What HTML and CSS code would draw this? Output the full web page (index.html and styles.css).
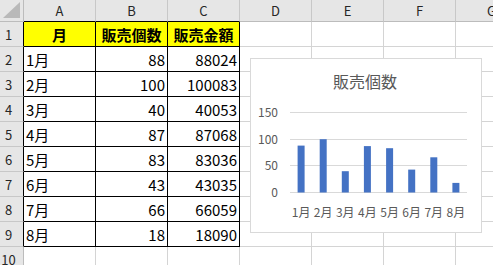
FILE: index.html
```html
<!DOCTYPE html>
<html lang="ja">
<head>
<meta charset="utf-8">
<title>販売個数</title>
<link rel="stylesheet" href="styles.css">
</head>
<body>
<div class="sheet">
  <div class="corner"><svg class="tri" width="17" height="16" viewBox="0 0 17 16"><polygon points="17,0 17,16 0,16" fill="#b9b9b9"/></svg></div>
  <div class="ch">A</div><div class="ch">B</div><div class="ch">C</div><div class="ch">D</div><div class="ch">E</div><div class="ch">F</div><div class="ch">G</div>

  <div class="rh blk">1</div>
  <div class="c t hd">月</div><div class="c t hd">販売個数</div><div class="c t hd">販売金額</div>
  <div class="c"></div><div class="c"></div><div class="c"></div><div class="c"></div>

  <div class="rh blk">2</div>
  <div class="c t mon">1月</div><div class="c t num">88</div><div class="c t num">88024</div>
  <div class="c"></div><div class="c"></div><div class="c"></div><div class="c"></div>

  <div class="rh blk">3</div>
  <div class="c t mon">2月</div><div class="c t num">100</div><div class="c t num">100083</div>
  <div class="c"></div><div class="c"></div><div class="c"></div><div class="c"></div>

  <div class="rh blk">4</div>
  <div class="c t mon">3月</div><div class="c t num">40</div><div class="c t num">40053</div>
  <div class="c"></div><div class="c"></div><div class="c"></div><div class="c"></div>

  <div class="rh blk">5</div>
  <div class="c t mon">4月</div><div class="c t num">87</div><div class="c t num">87068</div>
  <div class="c"></div><div class="c"></div><div class="c"></div><div class="c"></div>

  <div class="rh blk">6</div>
  <div class="c t mon">5月</div><div class="c t num">83</div><div class="c t num">83036</div>
  <div class="c"></div><div class="c"></div><div class="c"></div><div class="c"></div>

  <div class="rh blk">7</div>
  <div class="c t mon">6月</div><div class="c t num">43</div><div class="c t num">43035</div>
  <div class="c"></div><div class="c"></div><div class="c"></div><div class="c"></div>

  <div class="rh blk">8</div>
  <div class="c t mon">7月</div><div class="c t num">66</div><div class="c t num">66059</div>
  <div class="c"></div><div class="c"></div><div class="c"></div><div class="c"></div>

  <div class="rh blk">9</div>
  <div class="c t mon">8月</div><div class="c t num">18</div><div class="c t num">18090</div>
  <div class="c"></div><div class="c"></div><div class="c"></div><div class="c"></div>

  <div class="rh">10</div>
  <div class="c"></div><div class="c"></div><div class="c"></div>
  <div class="c"></div><div class="c"></div><div class="c"></div><div class="c"></div>
</div>

<div class="chart">
  <svg class="chart-svg" width="230" height="173" viewBox="0 0 230 173">
    <text class="title" x="114" y="29" text-anchor="middle">販売個数</text>
    <g class="grid">
      <line x1="39" y1="53.5" x2="216" y2="53.5"/>
      <line x1="39" y1="80.5" x2="216" y2="80.5"/>
      <line x1="39" y1="106.5" x2="216" y2="106.5"/>
      <line x1="39" y1="133.5" x2="216" y2="133.5"/>
    </g>
    <g class="ylab">
      <text x="27" y="57.5" text-anchor="end">150</text>
      <text x="27" y="84.5" text-anchor="end">100</text>
      <text x="27" y="110.5" text-anchor="end">50</text>
      <text x="27" y="137.5" text-anchor="end">0</text>
    </g>
    <g class="bars">
      <rect x="46.6" y="86.6" width="7" height="46.9"/>
      <rect x="68.7" y="80.2" width="7" height="53.3"/>
      <rect x="90.8" y="112.2" width="7" height="21.3"/>
      <rect x="112.9" y="87.1" width="7" height="46.4"/>
      <rect x="135.1" y="89.2" width="7" height="44.3"/>
      <rect x="157.2" y="110.6" width="7" height="22.9"/>
      <rect x="179.3" y="98.3" width="7" height="35.2"/>
      <rect x="201.4" y="123.9" width="7" height="9.6"/>
    </g>
    <g class="xlab">
      <text x="50.1" y="158" text-anchor="middle">1月</text>
      <text x="72.2" y="158" text-anchor="middle">2月</text>
      <text x="94.3" y="158" text-anchor="middle">3月</text>
      <text x="116.4" y="158" text-anchor="middle">4月</text>
      <text x="138.6" y="158" text-anchor="middle">5月</text>
      <text x="160.7" y="158" text-anchor="middle">6月</text>
      <text x="182.8" y="158" text-anchor="middle">7月</text>
      <text x="204.9" y="158" text-anchor="middle">8月</text>
    </g>
  </svg>
</div>
</body>
</html>
```

FILE: styles.css
```css
html, body {
  margin: 0;
  padding: 0;
  background: #ffffff;
  overflow: hidden;
}
body {
  width: 493px;
  height: 265px;
  position: relative;
  font-family: "Noto Sans CJK JP", "Noto Sans", sans-serif;
}
.sheet {
  display: grid;
  grid-template-columns: 24px repeat(7, 72px);
  grid-template-rows: 22px repeat(10, 25px);
}
.sheet > div {
  box-sizing: border-box;
  min-width: 0;
  overflow: hidden;
  white-space: nowrap;
}
.corner {
  background: #e6e6e6;
  border-right: 1px solid #bcbcbc;
  border-bottom: 1px solid #bcbcbc;
  position: relative;
}
.tri {
  position: absolute;
  right: 3px;
  bottom: 3px;
  display: block;
}
.ch {
  background: #e6e6e6;
  border-right: 1px solid #c8c8c8;
  border-bottom: 1px solid #bcbcbc;
  color: #262626;
  font-size: 13px;
  display: flex;
  align-items: center;
  justify-content: center;
}
.ch:nth-child(-n+4) {
  border-bottom-color: #000;
}
.rh {
  background: #e6e6e6;
  border-right: 1px solid #bcbcbc;
  border-bottom: 1px solid #c8c8c8;
  color: #262626;
  font-size: 13px;
  display: flex;
  align-items: center;
  justify-content: center;
  padding-right: 6px;
}
.rh.blk {
  border-right-color: #000;
}
.c {
  border-right: 1px solid #d4d4d4;
  border-bottom: 1px solid #d4d4d4;
  font-size: 15px;
  color: #000;
  display: flex;
  align-items: center;
}
.c.t {
  border-right-color: #000;
  border-bottom-color: #000;
}
.hd {
  background: #ffff00;
  font-weight: bold;
  justify-content: center;
}
.num {
  justify-content: flex-end;
  padding-right: 2px;
}
.mon {
  padding-left: 2px;
}
.chart {
  position: absolute;
  left: 250px;
  top: 58px;
  width: 232px;
  height: 175px;
  box-sizing: border-box;
  border: 1px solid #d9d9d9;
  background: #ffffff;
}
.chart-svg {
  display: block;
  font-family: "Noto Sans CJK JP", "Noto Sans", sans-serif;
}
.title {
  font-size: 16px;
  fill: #595959;
}
.grid line {
  stroke: #d9d9d9;
  stroke-width: 1;
}
.ylab text, .xlab text {
  font-size: 12px;
  fill: #595959;
}
.bars rect {
  fill: #4472c4;
}
```
